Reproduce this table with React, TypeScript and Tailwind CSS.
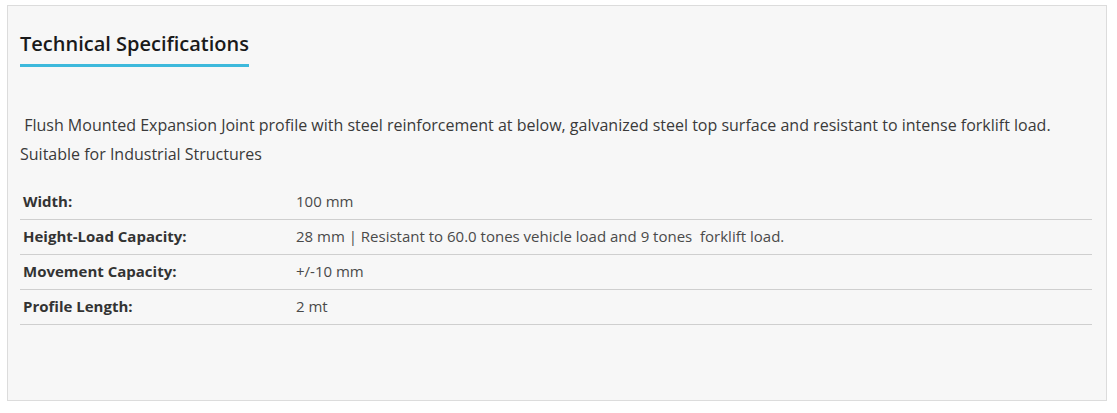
const specs = [
  { label: "Width:", value: "100 mm" },
  { label: "Height-Load Capacity:", value: "28 mm | Resistant to 60.0 tones vehicle load and 9 tones  forklift load." },
  { label: "Movement Capacity:", value: "+/-10 mm" },
  { label: "Profile Length:", value: "2 mt" },
];

export default function App() {
  return (
    <div className="w-[1117px] h-[413px] bg-white pt-[5px] pl-[7px] font-['Open_Sans',sans-serif]">
      <div className="w-[1100px] h-[396px] border border-[#dcdcdc] bg-[#f7f7f7] pl-[12px] pr-[14px]">
        <div className="pt-[25px]">
          <h2 className="inline-block text-[20px] font-semibold leading-[26px] text-[#1a1a1a] pb-[7px] border-b-[3px] border-[#3db9dc]">
            Technical Specifications
          </h2>
        </div>

        <p className="mt-[44px] text-[16px] leading-[29px] text-[#3a3a3a] whitespace-pre-wrap">
          {" Flush Mounted Expansion Joint profile with steel reinforcement at below, galvanized steel top surface and resistant to intense forklift load.\nSuitable for Industrial Structures"}
        </p>

        <table className="mt-[15px] w-[1072px] border-collapse text-[15px] text-[#333]">
          <tbody>
            {specs.map((s) => (
              <tr key={s.label} className="border-b border-[#cfcfcf]">
                <td className="w-[273px] h-[35px] px-[3px] font-bold text-[#333]">{s.label}</td>
                <td className="h-[35px] px-[3px] text-[#4a4a4a] whitespace-pre">{s.value}</td>
              </tr>
            ))}
          </tbody>
        </table>
      </div>
    </div>
  );
}
